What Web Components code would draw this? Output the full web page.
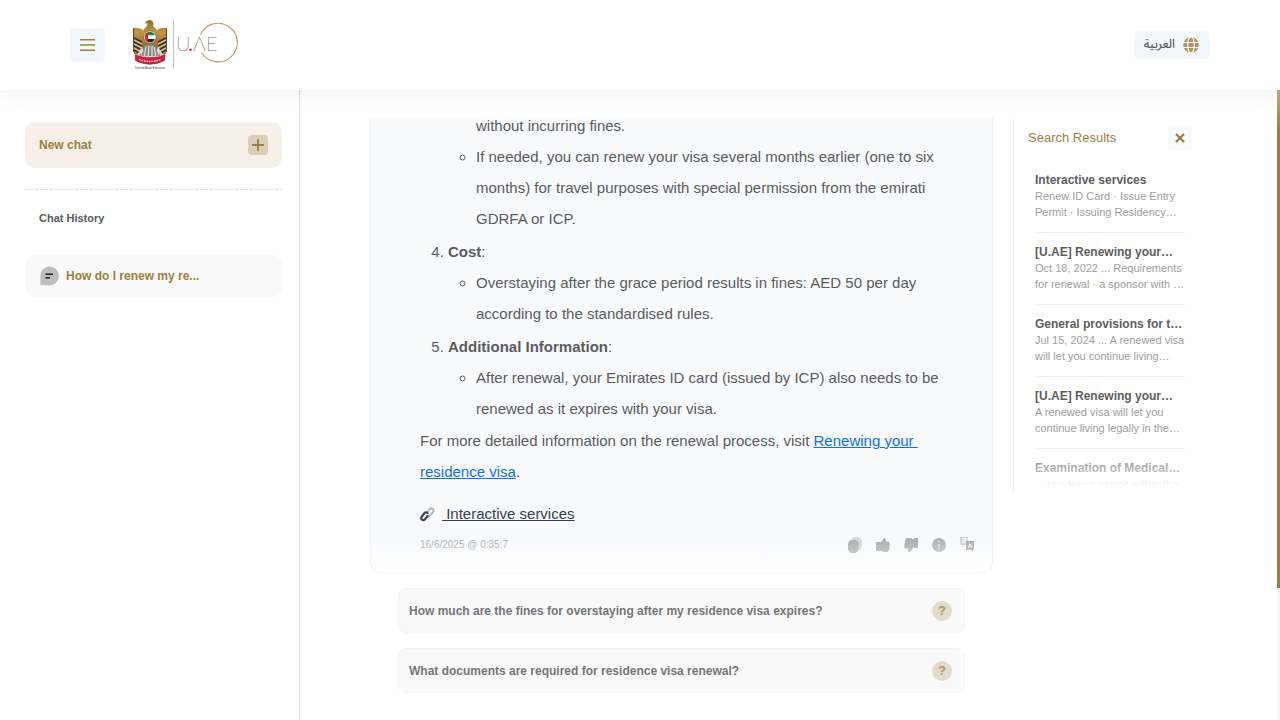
<!DOCTYPE html>
<html lang="en">
<head>
<meta charset="utf-8">
<meta name="viewport" content="width=device-width, initial-scale=1">
<title>U.AE chat</title>
<style>
  html, body { height: 100%; }
  body { margin: 0; background: #fff; color: #5a5b5d; font-family: "Liberation Sans", Arial, sans-serif; }
</style>
</head>
<body>
<chat-app></chat-app>

<script>
const define = (name, html) => {
  const template = document.createElement('template');
  template.innerHTML = '<style>*{box-sizing:border-box}button{font-family:inherit;border:0;cursor:pointer;margin:0}svg{display:block;flex:none}</style>' + html;
  customElements.define(name, class extends HTMLElement {
    constructor() {
      super();
      this.attachShadow({ mode: 'open' }).append(template.content.cloneNode(true));
    }
  });
};

define('uae-logo', `
<style>
  :host { display: block; }
  a { display: block; }
</style>
<a href="#" aria-label="U.AE home">
<svg width="108" height="54" viewBox="0 0 108 54">
  <defs>
    <linearGradient id="g" x1="0" y1="0" x2="0" y2="1"><stop offset="0" stop-color="#8e6a2f"/><stop offset=".4" stop-color="#c39645"/><stop offset="1" stop-color="#8a6325"/></linearGradient>
    <clipPath id="c"><circle cx="20" cy="19" r="5.200"/></clipPath>
  </defs>
  <path d="M3 10 Q7 9 10 13 L12 18 L11 38 L4 36 Q3 24 3 10Z M37 10 Q33 9 30 13 L28 18 L29 38 L36 36 Q37 24 37 10Z" fill="#a67b35"/>
  <path d="M16 9 Q18 6 17.500 5 L15.500 6 Q15 3.500 18 2.500 Q22 1 23.500 5 L23 8 L27 12 Q31 9 36 10.500 L35 22 L29 25 L27 32 L13 32 L11 25 L5 22 L3.500 10.500 Q8 9 13 12Z" fill="url(#g)"/>
  <path d="M3.500 11 V34 M36.500 11 V34" stroke="#4d3c1d" stroke-width=".9" fill="none"/>
  <path d="M4 20 L12 24 M4 24 L12 28 M4 28 L12 32 M4 32 L11 36 M36 20 L28 24 M36 24 L28 28 M36 28 L28 32 M36 32 L29 36" stroke="#39352f" stroke-width="1.700"/>
  <path d="M4 22 L12 26 M4 26 L12 30 M4 30 L11 34 M36 22 L28 26 M36 26 L28 30 M36 30 L29 34" stroke="#d8c9a5" stroke-width="1.200"/>
  <path d="M15 27 H25 L29 38 H11Z" fill="#8d8d8e"/>
  <path d="M16 29 L14 39 M19 28 L18 39 M22 28 L22 39 M24 29 L26 39" stroke="#e9e9e9" stroke-width="1"/>
  <path d="M12 31 L8 38 M28 31 L32 38" stroke="#d3d8da" stroke-width="2.600"/>
  <circle cx="20" cy="19" r="6.300" fill="#f3eee4" stroke="#70593a" stroke-width=".8"/>
  <g clip-path="url(#c)">
    <path d="M14 13h12v4.500H14z" fill="#178348"/><path d="M14 17.500h12v3.500H14z" fill="#fff"/><path d="M14 21h12v5H14z" fill="#222"/><path d="M14 13h4v13h-4z" fill="#d5203a"/>
  </g>
  <path d="M5 37 Q20 42 35 37 L34.500 42.500 Q20 50 5.500 42.500Z" fill="#cf2240" stroke="#92152b" stroke-width=".6"/>
  <path d="M9 41.500 Q20 45.500 31 41.500" stroke="#f3c9cf" stroke-width="1.300" fill="none" stroke-dasharray="1.700 .8"/>
  <text x="5" y="51" font-family="Liberation Sans, sans-serif" font-size="3.200" fill="#444">United Arab Emirates</text>
  <path d="M43.500 1.500V50" stroke="#bfc1c3" stroke-width="1"/>
  <g font-family="Lato, sans-serif" font-weight="100" font-size="20" fill="#66686b" stroke="#66686b" stroke-width=".2">
    <text x="46" y="33">U</text><text x="63" y="33">Λ</text><text x="76" y="33">E</text>
  </g>
  <circle cx="60.500" cy="31.800" r="1.300" fill="#e12b4a"/>
  <path d="M70.500 16.500 A19.300 19.300 0 1 1 71.500 34.500" fill="none" stroke="#bd9a66" stroke-width="1.100"/>
</svg></a>`);

define('site-header', `
<style>
  :host { display: block; position: relative; z-index: 2; background: #fff; box-shadow: 0 0 24px rgba(0,0,0,.08); }
  header { display: flex; align-items: center; height: 90px; padding: 0 70px; }
  .menu { display: grid; place-items: center; width: 35px; height: 34px; padding: 0; border-radius: 5px; background: #f3f7fb; }
  uae-logo { margin-left: 25px; }
  .lang { display: flex; align-items: center; gap: 8px; height: 28px; margin-left: auto; padding: 0 11px 0 10px; border-radius: 5px;
    background: #f3f7fb; color: #5a5b5d; font: 500 12px/28px "Noto Sans Arabic", "Noto Kufi Arabic", "DejaVu Sans", sans-serif; }
</style>
<header>
  <button class="menu" aria-label="Menu"><svg width="15" height="12" viewBox="0 0 15 12"><path d="M0 .8h15M0 6h15M0 11.200h15" stroke="#a0823c" stroke-width="1.400"/></svg></button>
  <uae-logo></uae-logo>
  <button class="lang" lang="ar"><span>العربية</span>
    <svg width="16" height="16" viewBox="0 0 16 16"><circle cx="8" cy="8" r="7.800" fill="#b0965a"/><path d="M0 5.500h16M0 10.500h16" stroke="#f3f7fb" stroke-width="1.200"/><ellipse cx="8" cy="8" rx="3.300" ry="8.200" fill="none" stroke="#f3f7fb" stroke-width="1.200"/></svg>
  </button>
</header>`);

define('chat-sidebar', `
<style>
  :host { display: block; border-right: 1px solid #dcdce4; padding: 32px 17px 0 25px; }
  button { display: flex; align-items: center; width: 100%; border-radius: 10px; color: #9b7f3f; font-size: 12px; font-weight: 700; text-align: left; }
  .new { justify-content: space-between; height: 46px; padding: 0 14px; background: #f5f1e9; }
  hr { height: 1px; margin: 21px 0 20px; border: 0; background: repeating-linear-gradient(90deg, #d9d9df 0 3px, transparent 3px 5px); }
  h2 { margin: 0 14px 29px; font-size: 11px; line-height: 16px; }
  .item { gap: 7px; height: 42px; padding: 0 14px; background: #f9f9f9; }
</style>
<button class="new">New chat
  <svg width="20" height="20" viewBox="0 0 20 20"><rect width="20" height="20" rx="4" fill="#dacfb8"/><path d="M10 4v12M4 10h12" stroke="#9b7f3f" stroke-width="1.800"/></svg>
</button>
<hr>
<h2>Chat History</h2>
<button class="item">
  <svg width="20" height="20" viewBox="0 0 20 20"><path d="M10.500 .5a9.300 9.300 0 1 1 0 18.800H1.400V10A9.300 9.300 0 0 1 10.500 .5Z" fill="#bdbdbd"/><path d="M6.500 8.300h7.500M6.500 11.800h4.500" stroke="#222" stroke-width="1.500"/></svg>
  <span>How do I renew my re...</span>
</button>`);

define('message-card', `
<style>
  :host { display: flex; flex-direction: column; justify-content: flex-end; position: relative; overflow: hidden; min-height: 0;
    background: #f9fafc; border: 1px solid #eff0f3; border-width: 0 1px 1px; border-bottom-color: #f8f8f8; border-radius: 0 0 12px 12px; }
  :host::after { content: ""; position: absolute; inset: auto 0 0; height: 36px; background: linear-gradient(rgba(255,255,255,0), rgba(255,255,255,.75)); pointer-events: none; }
  .text { flex: none; padding: 0 28px 0 49px; }
  footer { display: flex; flex: none; align-items: center; gap: 12px; padding: 8px 17px 20px 49px; }
  time { margin-right: auto; color: #a9aaac; font-size: 10px; line-height: 16px; }
  footer button { display: grid; place-items: center; width: 16px; height: 16px; padding: 0; background: none; }
</style>
<div class="text"><slot></slot></div>
<footer>
  <time datetime="2025-06-16T00:35:07">16/6/2025 @ 0:35:7</time>
  <button aria-label="Copy"><svg width="16" height="16" viewBox="0 0 16 16"><rect x="4" y="0" width="11" height="13" rx="4.500" fill="#d2d4d6"/><rect x="1" y="3" width="10.500" height="13" rx="4.500" fill="#a8aaab"/></svg></button>
  <button aria-label="Good answer"><svg width="16" height="16" viewBox="0 0 16 16"><path d="M1 5h3q1 0 1 1L8 2.500Q8.500 1 10 1Q11.500 2 10.800 4.500H13.500Q15.200 5 14.800 7L14 12.500Q13.500 14.700 12 15H9L5 13.500V14H1Z" fill="#a8aaab"/></svg></button>
  <button aria-label="Bad answer"><svg width="16" height="16" viewBox="0 0 16 16"><path d="M15 11h-3q-1 0-1-1L8 13.500Q7.500 15 6 15Q4.500 14 5.200 11.500H2.500Q.8 11 1.200 9L2 3.500Q2.500 1.300 4 1H7L11 2.500V1H15Z" fill="#a8aaab"/></svg></button>
  <button aria-label="Information"><svg width="16" height="16" viewBox="0 0 16 16"><circle cx="8" cy="8" r="7" fill="#adafb0"/><path d="M8 7v5M8 4v1.500" stroke="#dfe1e2" stroke-width="1.500"/></svg></button>
  <button aria-label="Translate"><svg width="16" height="16" viewBox="0 0 16 16"><path d="M2-1h7v9H5l-2 2V8H1V0Z" fill="#d0d2d3"/><path d="M3 2h5M5.500 1v1M7 2Q6.500 5 3 6M4 3q1 2 3.500 3" stroke="#f6f7f8" fill="none"/><path d="M7 4h8v9h-1v2l-2-2H7z" fill="#a8aaab"/><path d="M9 11 11 6.500 13 11M9.700 9.500h2.600" stroke="#f0f1f2" fill="none"/></svg></button>
</footer>`);

define('answer-text', `
<style>
  :host { display: block; font-size: 15px; line-height: 31px; }
  ol { margin: 0; padding-left: 28px; }
  ul { margin: 0; padding-left: 28px; list-style: circle; }
  ol > li + li { margin-top: 2px; }
  .bare { list-style: none; }
  p { margin: 1px 0 0; }
  a { color: #0d6efd; }
  .service { display: flex; align-items: center; gap: 6px; margin-top: 11px; }
  .service a { color: #34404f; }
</style>
<ol start="3">
  <li class="bare"><ul>
    <li class="bare">without incurring fines.</li>
    <li>If needed, you can renew your visa several months earlier (one to six months) for travel purposes with special permission from the emirati GDRFA or ICP.</li>
  </ul></li>
  <li><strong>Cost</strong>:
    <ul><li>Overstaying after the grace period results in fines: AED 50 per day according to the standardised rules.</li></ul>
  </li>
  <li><strong>Additional Information</strong>:
    <ul><li>After renewal, your Emirates ID card (issued by ICP) also needs to be renewed as it expires with your visa.</li></ul>
  </li>
</ol>
<p>For more detailed information on the renewal process, visit <a href="#">Renewing your&nbsp;<br>residence visa</a>.</p>
<div class="service">
  <svg width="16" height="16" viewBox="0 0 16 16" fill="none" stroke-linecap="round"><path d="M7.200 6.200 9.500 3.300Q11 1.500 12.800 3T12.700 6.500L10 9.500Q8.500 10.800 7 9.500" stroke="#b4bac0" stroke-width="2"/><path d="M7.500 7Q6 5.800 4.400 7.200L1.900 10.300Q.5 12.500 2 13.700T5 13.300L7.500 10.200" stroke="#3b4754" stroke-width="2.200"/></svg>
  <a href="#">&nbsp;Interactive services</a>
</div>`);

define('suggested-question', `
<style>
  :host { display: block; }
  button { display: flex; align-items: center; justify-content: space-between; width: 100%; height: 45px; padding: 0 12px 0 10px;
    border: 1px solid #f4f4f4; border-radius: 8px; background: #f9f9f9; color: #757677; font-size: 12px; font-weight: 700; text-align: left; }
  i { display: grid; place-items: center; width: 20px; height: 20px; border-radius: 50%; background: #e3dccd; color: #b0965a; font-size: 13px; font-style: normal; line-height: 20px; }
</style>
<button><span><slot></slot></span><i aria-hidden="true">?</i></button>`);

define('search-result', `
<style>
  :host { display: block; padding: 11px 0 12px; border-bottom: 1px solid #eeeeef; color: #9c9d9e; font-size: 11px; line-height: 16px; }
  a { display: block; color: #5c5d5f; font-size: 12px; font-weight: 700; text-decoration: none; white-space: nowrap; }
  p { margin: 0; white-space: nowrap; }
</style>
<a href="#"><slot name="title"></slot></a>
<p><slot></slot></p>`);

define('search-panel', `
<style>
  :host { display: block; position: relative; overflow: hidden; border-left: 1px solid #eeeeef; padding: 7px 18px 0 14px; }
  :host::after { content: ""; position: absolute; inset: auto 0 0 -1px; height: 48px; background: linear-gradient(rgba(255,255,255,0), #fff 44px); pointer-events: none; }
  header { display: flex; align-items: center; justify-content: space-between; margin-bottom: 11px; }
  h2 { margin: 0; color: #9b7f3f; font-size: 13px; font-weight: 400; }
  button { display: grid; place-items: center; width: 24px; height: 25px; padding: 0; border-radius: 4px; background: #f8f9fb; }
  .list { padding: 0 7px; }
</style>
<header><h2>Search Results</h2>
  <button aria-label="Close"><svg width="12" height="12" viewBox="0 0 12 12"><path d="M2 2l8 8M10 2l-8 8" stroke="#92783b" stroke-width="1.900"/></svg></button>
</header>
<div class="list"><slot></slot></div>`);

define('chat-app', `
<style>
  :host { display: flex; flex-direction: column; height: 100vh; min-height: 480px; overflow: hidden; }
  .body { display: grid; grid-template-columns: 300px 1fr 3px; flex: 1; min-height: 0; }
  main { display: grid; grid-template-columns: minmax(0, 1fr) 197px; gap: 20px; min-height: 0; padding: 28px 67px 27px 70px; }
  .chat { display: flex; flex-direction: column; gap: 14px; min-height: 0; }
  message-card { flex: 1; }
  .questions { display: grid; gap: 15px; padding: 0 28px; }
  search-panel { align-self: start; height: 375px; }
  .bar { background: #f4f4f4; }
  .thumb { height: 79%; background: linear-gradient(#c2ad7c, #98803f 40px); }
</style>
<site-header></site-header>
<div class="body">
  <chat-sidebar></chat-sidebar>
  <main>
    <div class="chat">
      <message-card><answer-text></answer-text></message-card>
      <div class="questions">
        <suggested-question>How much are the fines for overstaying after my residence visa expires?</suggested-question>
        <suggested-question>What documents are required for residence visa renewal?</suggested-question>
      </div>
    </div>
    <search-panel>
      <search-result><span slot="title">Interactive services</span>Renew ID Card · Issue Entry<br>Permit · Issuing Residency…</search-result>
      <search-result><span slot="title">[U.AE] Renewing your…</span>Oct 18, 2022 ... Requirements<br>for renewal · a sponsor with …</search-result>
      <search-result><span slot="title">General provisions for t…</span>Jul 15, 2024 ... A renewed visa<br>will let you continue living…</search-result>
      <search-result><span slot="title">[U.AE] Renewing your…</span>A renewed visa will let you<br>continue living legally in the…</search-result>
      <search-result><span slot="title">Examination of Medical…</span>... residence permit within the</search-result>
    </search-panel>
  </main>
  <div class="bar"><div class="thumb"></div></div>
</div>`);
</script>
</body>
</html>
